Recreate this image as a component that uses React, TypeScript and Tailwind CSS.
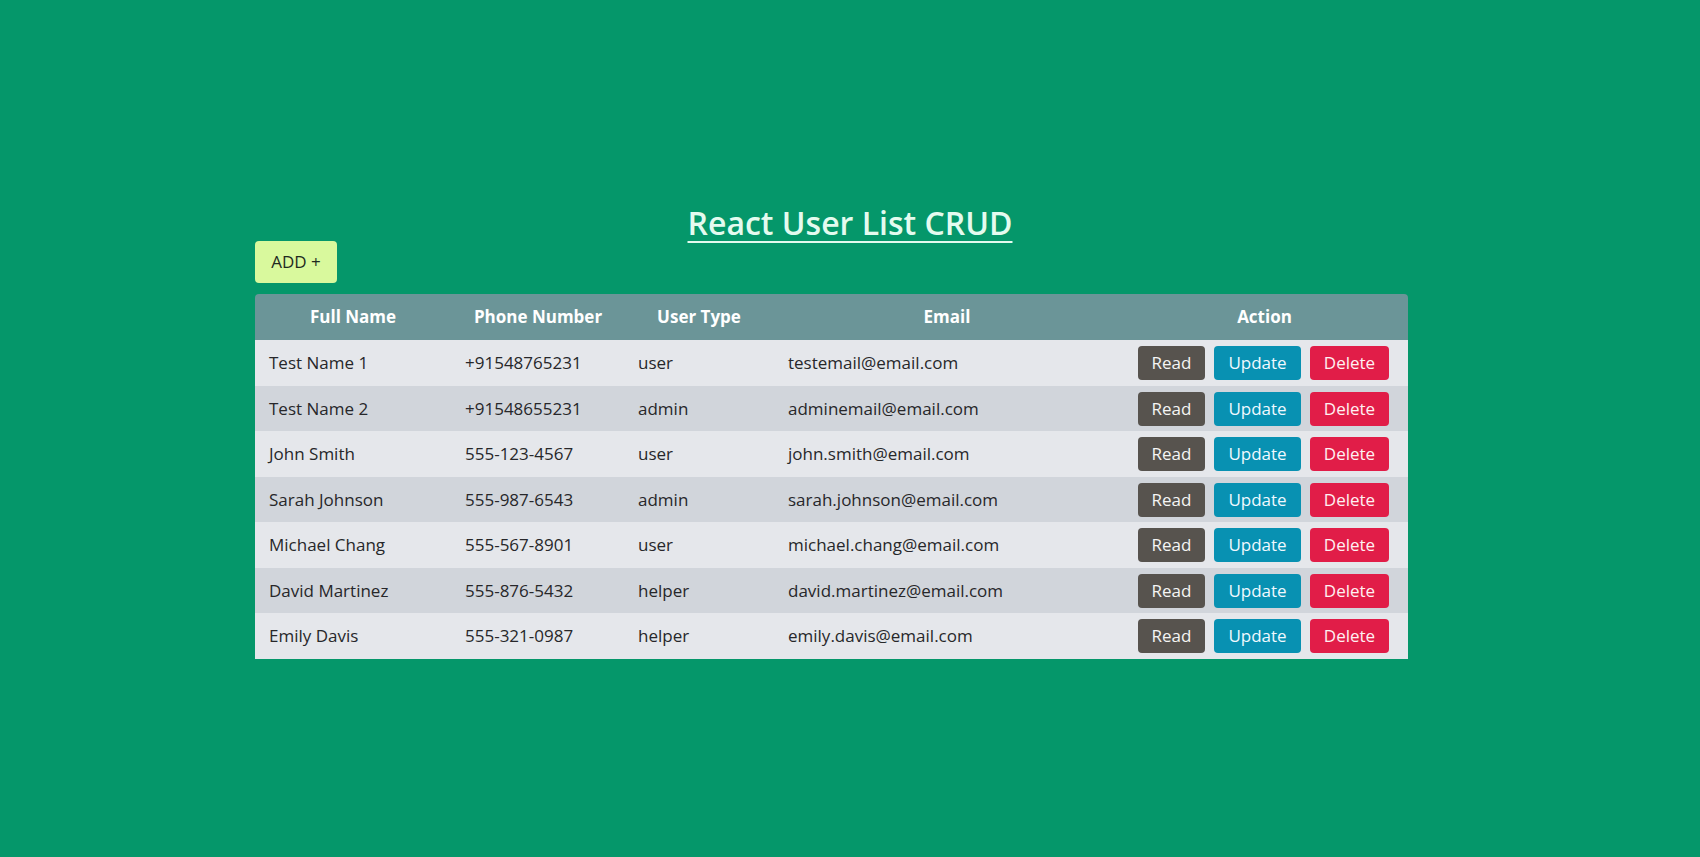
import React from "react";

const users = [
  { name: "Test Name 1", phone: "+91548765231", type: "user", email: "testemail@email.com" },
  { name: "Test Name 2", phone: "+91548655231", type: "admin", email: "adminemail@email.com" },
  { name: "John Smith", phone: "555-123-4567", type: "user", email: "john.smith@email.com" },
  { name: "Sarah Johnson", phone: "555-987-6543", type: "admin", email: "sarah.johnson@email.com" },
  { name: "Michael Chang", phone: "555-567-8901", type: "user", email: "michael.chang@email.com" },
  { name: "David Martinez", phone: "555-876-5432", type: "helper", email: "david.martinez@email.com" },
  { name: "Emily Davis", phone: "555-321-0987", type: "helper", email: "emily.davis@email.com" },
];

export default function App() {
  return (
    <div
      className="min-h-screen w-full bg-[#05976a] pt-[205px]"
      style={{ fontFamily: '"Open Sans", "Noto Sans", sans-serif' }}
    >
      <div className="w-[70%] mx-auto">
        <h1 className="text-center text-[32px] leading-[36px] font-semibold text-[#e4fbef] underline underline-offset-[6px] decoration-2">
          React User List CRUD
        </h1>
        <button className="block w-[82px] h-[42px] rounded-[4px] bg-[#d9f99d] text-[#1f2a1f] text-[17px]">
          ADD +
        </button>
        <table className="mt-[11px] border-collapse table-fixed w-[1153px] rounded-t-[4px] overflow-hidden">
          <colgroup>
            <col className="w-[196px]" />
            <col className="w-[174px]" />
            <col className="w-[148px]" />
            <col className="w-[348px]" />
            <col className="w-[287px]" />
          </colgroup>
          <thead>
            <tr className="bg-[#6b9598] h-[46px]">
              <th className="text-white font-bold text-[17px] text-center">Full Name</th>
              <th className="text-white font-bold text-[17px] text-center">Phone Number</th>
              <th className="text-white font-bold text-[17px] text-center">User Type</th>
              <th className="text-white font-bold text-[17px] text-center">Email</th>
              <th className="text-white font-bold text-[17px] text-center">Action</th>
            </tr>
          </thead>
          <tbody>
            {users.map((u, i) => (
              <tr
                key={i}
                className={i % 2 === 0 ? "bg-[#e5e7eb] h-[46px]" : "bg-[#d1d5db] h-[45px]"}
              >
                <td className="pl-[14px] text-[17px] text-[#27272a]">{u.name}</td>
                <td className="pl-[14px] text-[17px] text-[#27272a]">{u.phone}</td>
                <td className="pl-[13px] text-[17px] text-[#27272a]">{u.type}</td>
                <td className="pl-[15px] text-[17px] text-[#27272a]">{u.email}</td>
                <td className="pl-[17px]">
                  <div className="flex items-center">
                    <button className="w-[67px] h-[34px] rounded-[4px] bg-[#57534e] text-[#f5f5f4] text-[17px]">Read</button>
                    <button className="ml-[9px] w-[87px] h-[34px] rounded-[4px] bg-[#0891b2] text-[#f0f9ff] text-[17px]">Update</button>
                    <button className="ml-[9px] w-[79px] h-[34px] rounded-[4px] bg-[#e11d48] text-[#fff1f2] text-[17px]">Delete</button>
                  </div>
                </td>
              </tr>
            ))}
          </tbody>
        </table>
      </div>
    </div>
  );
}
